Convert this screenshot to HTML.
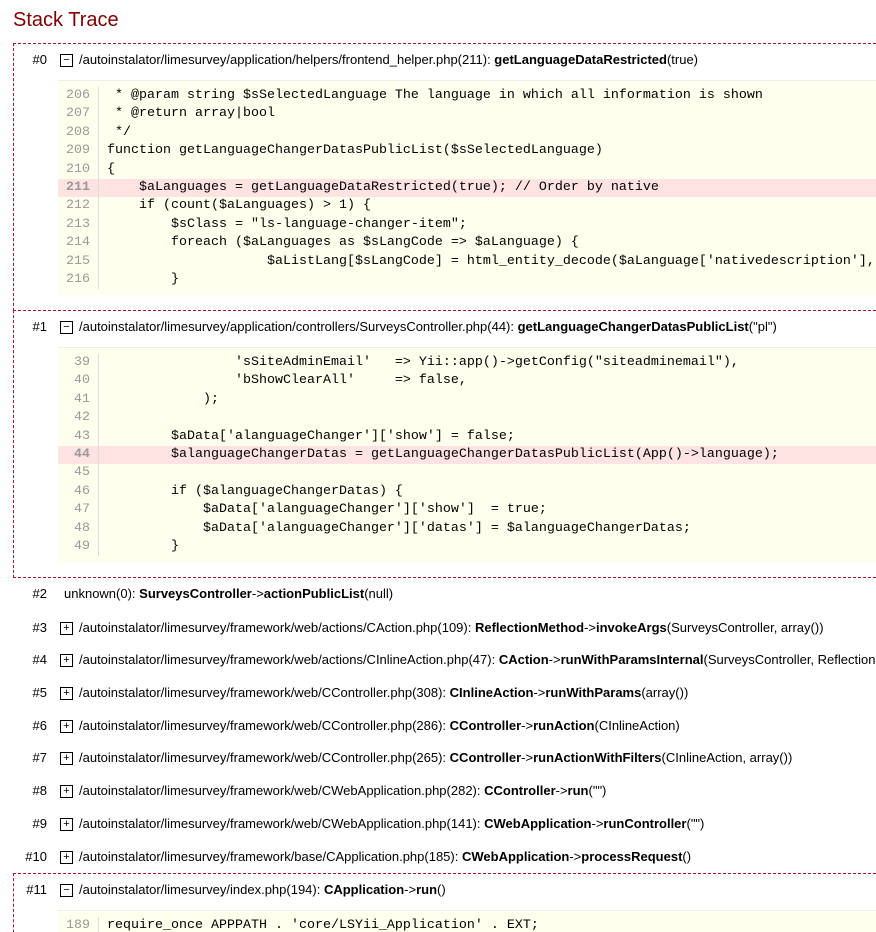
<!DOCTYPE html>
<html><head><meta charset="utf-8"><style>
html,body{margin:0;width:876px;height:932px;overflow:hidden}
body{background:#fff;position:relative;font-family:"Liberation Sans",Tahoma,sans-serif;font-size:13px;color:#000}
.t{position:absolute;left:13px;top:9px;font-size:20px;color:#800000}
.box{position:absolute;left:13px;width:863px;border:1px dashed #a01a33;border-right:none;box-sizing:border-box}
.row{position:absolute;left:0;white-space:nowrap;height:18px;line-height:18px;width:876px;overflow:hidden}
.n{position:absolute;width:50px;text-align:right;left:-3px;color:#000}
.pm{position:absolute;left:60px;top:3px;width:11px;height:11px;border:1px solid #000;font-size:11px;line-height:10px;text-align:center}
.f{position:absolute;left:79px}
.code{position:absolute;left:58px;width:818px;overflow:hidden;background:#ffffee;border-top:1px solid #eee;font-family:"Liberation Mono",monospace;font-size:13.33px;padding-top:6px;padding-bottom:6px}
.l{height:18.4px;line-height:18.4px;white-space:pre;position:relative}
.l .ln{display:inline-block;width:32px;text-align:right;color:#999;border-right:1px solid #ddd;padding-right:8px;margin-right:8px}
.hl{background:#ffe3e3}
.hl .ln{font-weight:bold;color:#999}
</style></head><body>
<div class="t">Stack Trace</div>

<div class="box" style="top:43px;height:268px"></div>
<div class="box" style="top:310px;height:268px"></div>
<div class="box" style="top:873px;height:80px"></div>

<div class="row" style="top:51px"><span class="n">#0</span><span class="pm">−</span><span class="f">/autoinstalator/limesurvey/application/helpers/frontend_helper.php(211): <b>getLanguageDataRestricted</b>(true)</span></div>
<div class="code" style="top:80px">
<div class="l"><span class="ln">206</span> * @param string $sSelectedLanguage The language in which all information is shown</div>
<div class="l"><span class="ln">207</span> * @return array|bool</div>
<div class="l"><span class="ln">208</span> */</div>
<div class="l"><span class="ln">209</span>function getLanguageChangerDatasPublicList($sSelectedLanguage)</div>
<div class="l"><span class="ln">210</span>{</div>
<div class="l hl"><span class="ln">211</span>    $aLanguages = getLanguageDataRestricted(true); // Order by native</div>
<div class="l"><span class="ln">212</span>    if (count($aLanguages) > 1) {</div>
<div class="l"><span class="ln">213</span>        $sClass = "ls-language-changer-item";</div>
<div class="l"><span class="ln">214</span>        foreach ($aLanguages as $sLangCode => $aLanguage) {</div>
<div class="l"><span class="ln">215</span>                    $aListLang[$sLangCode] = html_entity_decode($aLanguage['nativedescription'], ENT_QUOTES);</div>
<div class="l"><span class="ln">216</span>        }</div>
</div>

<div class="row" style="top:318px"><span class="n">#1</span><span class="pm">−</span><span class="f">/autoinstalator/limesurvey/application/controllers/SurveysController.php(44): <b>getLanguageChangerDatasPublicList</b>("pl")</span></div>
<div class="code" style="top:347px">
<div class="l"><span class="ln">39</span>                'sSiteAdminEmail'   => Yii::app()->getConfig("siteadminemail"),</div>
<div class="l"><span class="ln">40</span>                'bShowClearAll'     => false,</div>
<div class="l"><span class="ln">41</span>            );</div>
<div class="l"><span class="ln">42</span></div>
<div class="l"><span class="ln">43</span>        $aData['alanguageChanger']['show'] = false;</div>
<div class="l hl"><span class="ln">44</span>        $alanguageChangerDatas = getLanguageChangerDatasPublicList(App()->language);</div>
<div class="l"><span class="ln">45</span></div>
<div class="l"><span class="ln">46</span>        if ($alanguageChangerDatas) {</div>
<div class="l"><span class="ln">47</span>            $aData['alanguageChanger']['show']  = true;</div>
<div class="l"><span class="ln">48</span>            $aData['alanguageChanger']['datas'] = $alanguageChangerDatas;</div>
<div class="l"><span class="ln">49</span>        }</div>
</div>

<div class="row" style="top:585px"><span class="n">#2</span><span class="f" style="left:64px">unknown(0): <b>SurveysController</b>-&gt;<b>actionPublicList</b>(null)</span></div>
<div class="row" style="top:619px"><span class="n">#3</span><span class="pm">+</span><span class="f">/autoinstalator/limesurvey/framework/web/actions/CAction.php(109): <b>ReflectionMethod</b>-&gt;<b>invokeArgs</b>(SurveysController, array())</span></div>
<div class="row" style="top:651px"><span class="n">#4</span><span class="pm">+</span><span class="f">/autoinstalator/limesurvey/framework/web/actions/CInlineAction.php(47): <b>CAction</b>-&gt;<b>runWithParamsInternal</b>(SurveysController, ReflectionMethod)</span></div>
<div class="row" style="top:684px"><span class="n">#5</span><span class="pm">+</span><span class="f">/autoinstalator/limesurvey/framework/web/CController.php(308): <b>CInlineAction</b>-&gt;<b>runWithParams</b>(array())</span></div>
<div class="row" style="top:717px"><span class="n">#6</span><span class="pm">+</span><span class="f">/autoinstalator/limesurvey/framework/web/CController.php(286): <b>CController</b>-&gt;<b>runAction</b>(CInlineAction)</span></div>
<div class="row" style="top:749px"><span class="n">#7</span><span class="pm">+</span><span class="f">/autoinstalator/limesurvey/framework/web/CController.php(265): <b>CController</b>-&gt;<b>runActionWithFilters</b>(CInlineAction, array())</span></div>
<div class="row" style="top:782px"><span class="n">#8</span><span class="pm">+</span><span class="f">/autoinstalator/limesurvey/framework/web/CWebApplication.php(282): <b>CController</b>-&gt;<b>run</b>("")</span></div>
<div class="row" style="top:815px"><span class="n">#9</span><span class="pm">+</span><span class="f">/autoinstalator/limesurvey/framework/web/CWebApplication.php(141): <b>CWebApplication</b>-&gt;<b>runController</b>("")</span></div>
<div class="row" style="top:848px"><span class="n">#10</span><span class="pm">+</span><span class="f">/autoinstalator/limesurvey/framework/base/CApplication.php(185): <b>CWebApplication</b>-&gt;<b>processRequest</b>()</span></div>
<div class="row" style="top:881px"><span class="n">#11</span><span class="pm">−</span><span class="f">/autoinstalator/limesurvey/index.php(194): <b>CApplication</b>-&gt;<b>run</b>()</span></div>
<div class="code" style="top:910px">
<div class="l"><span class="ln">189</span>require_once APPPATH . 'core/LSYii_Application' . EXT;</div>
</div>
</body></html>
